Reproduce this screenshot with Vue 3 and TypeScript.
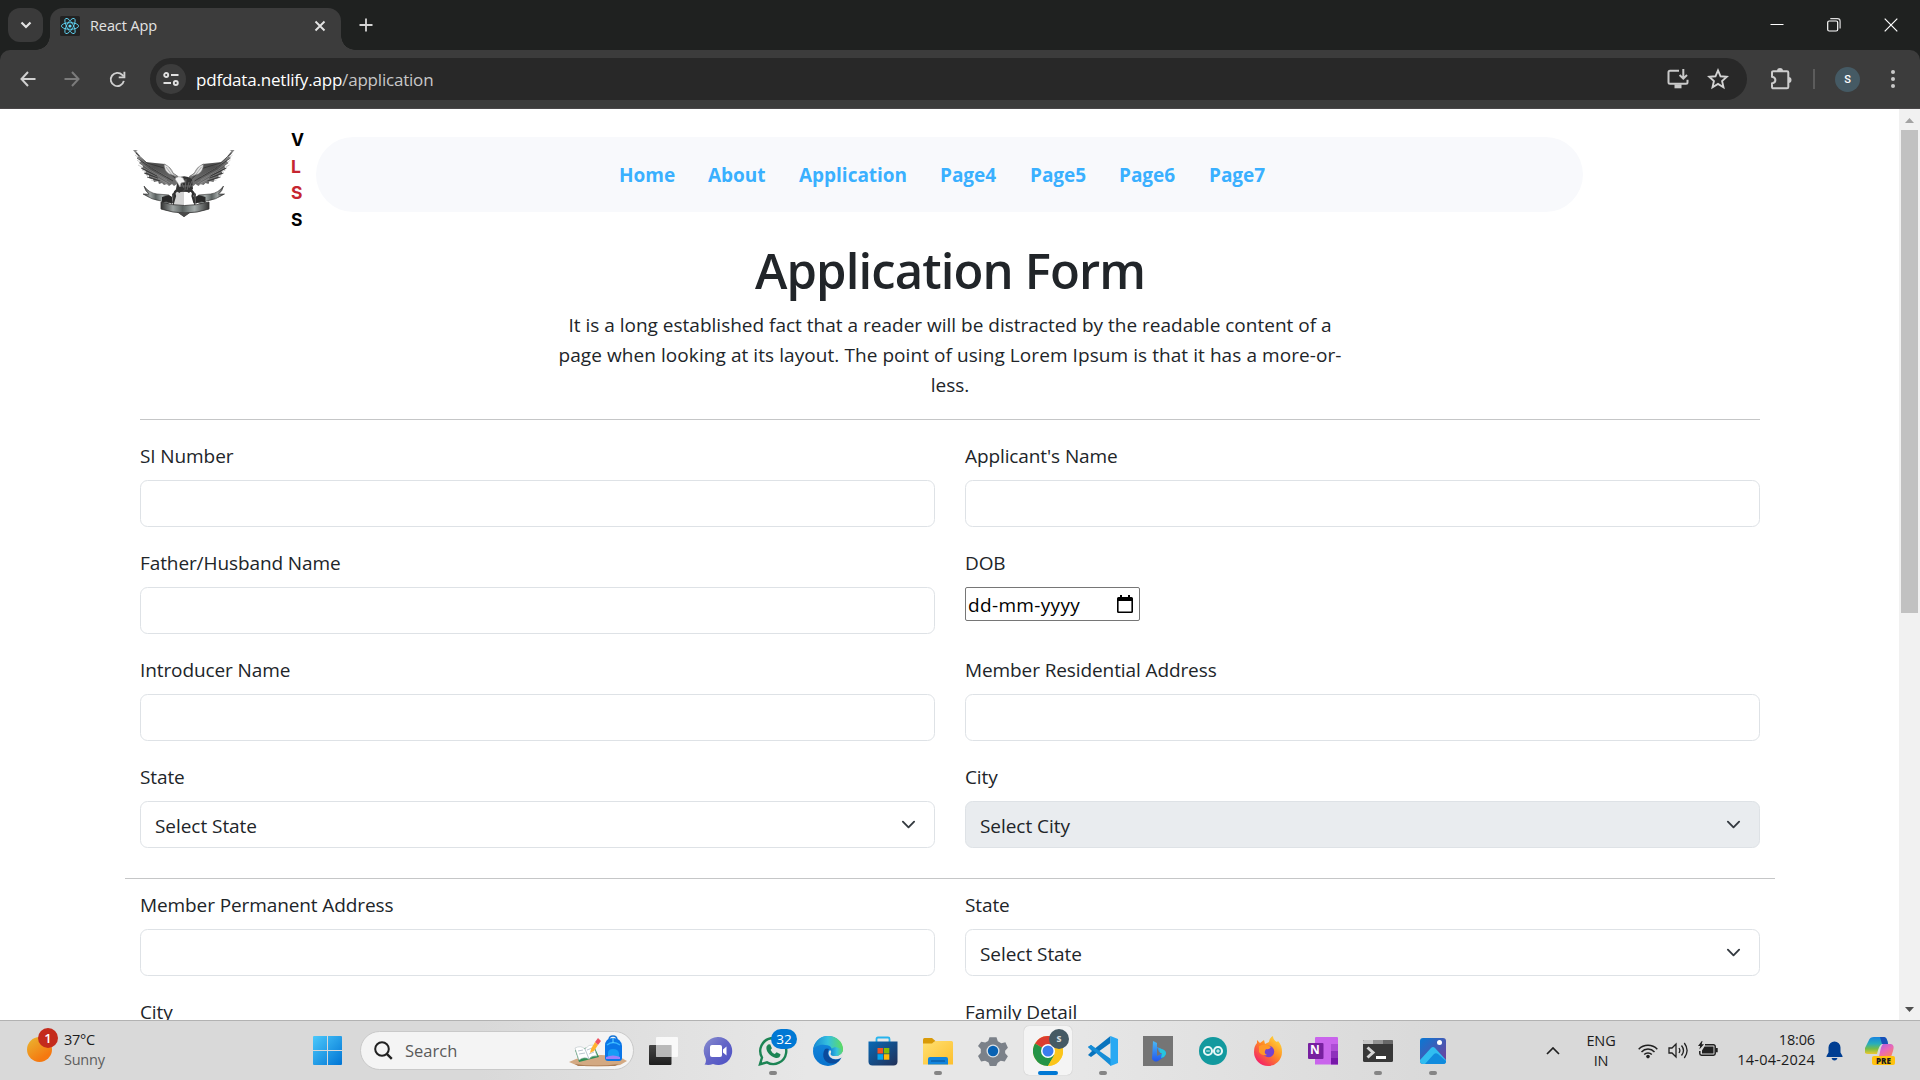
<script setup lang="ts">
import { ref } from 'vue'

interface Field {
  label: string
  kind: 'text' | 'date' | 'select'
  placeholder?: string
  disabled?: boolean
}

const navLinks = ref<{ label: string; width: number }[]>([
  { label: 'Home', width: 89 },
  { label: 'About', width: 91 },
  { label: 'Application', width: 141 },
  { label: 'Page4', width: 90 },
  { label: 'Page5', width: 89 },
  { label: 'Page6', width: 90 },
  { label: 'Page7', width: 58 },
])

const residential: Field[] = [
  { label: 'SI Number', kind: 'text' },
  { label: "Applicant's Name", kind: 'text' },
  { label: 'Father/Husband Name', kind: 'text' },
  { label: 'DOB', kind: 'date', placeholder: 'dd-mm-yyyy' },
  { label: 'Introducer Name', kind: 'text' },
  { label: 'Member Residential Address', kind: 'text' },
  { label: 'State', kind: 'select', placeholder: 'Select State' },
  { label: 'City', kind: 'select', placeholder: 'Select City', disabled: true },
]

const permanent: Field[] = [
  { label: 'Member Permanent Address', kind: 'text' },
  { label: 'State', kind: 'select', placeholder: 'Select State' },
  { label: 'City', kind: 'text' },
  { label: 'Family Detail', kind: 'text' },
]

const groups = [residential, permanent]
const letters = ['V', 'L', 'S', 'S']
</script>

<template>
  <div class="screen">
    <header class="tabbar">
      <button class="tab-search">
        <svg width="12" height="8" viewBox="0 0 12 8"><path d="M1.5 1.5 6 6l4.500-4.500" fill="none" stroke="#e3e3e3" stroke-width="2.200" /></svg>
      </button>
      <div class="tab">
        <svg class="favicon" width="20" height="20" viewBox="0 0 20 20">
          <rect width="20" height="20" rx="1.500" fill="#222" />
          <g fill="none" stroke="#61dafb" stroke-width="0.850">
            <ellipse cx="10" cy="10" rx="8.600" ry="3.300" />
            <ellipse cx="10" cy="10" rx="8.600" ry="3.300" transform="rotate(60 10 10)" />
            <ellipse cx="10" cy="10" rx="8.600" ry="3.300" transform="rotate(120 10 10)" />
          </g>
          <circle cx="10" cy="10" r="1.600" fill="#61dafb" />
        </svg>
        <span class="tab-title">React App</span>
        <svg class="tab-close" width="12" height="12" viewBox="0 0 12 12"><path d="M1.500 1.500l9 9M10.500 1.500l-9 9" stroke="#e3e3e3" stroke-width="1.900" /></svg>
      </div>
      <svg class="new-tab" width="14" height="14" viewBox="0 0 14 14"><path d="M7 .5v13M.5 7h13" stroke="#d5d5d5" stroke-width="1.800" /></svg>
      <div class="window-buttons">
        <svg width="14" height="14" viewBox="0 0 14 14"><path d="M.5 6.500h13" stroke="#fff" /></svg>
        <svg width="14" height="14" viewBox="0 0 14 14" fill="none"><rect x=".7" y="3" width="10" height="10" rx="1.500" stroke="#fff" stroke-width="1.200" /><path d="M3.300.7h7.200a2.600 2.600 0 0 1 2.600 2.600v7.300" stroke="#ddd" stroke-width="1.200" /></svg>
        <svg width="14" height="14" viewBox="0 0 14 14"><path d="M.7.7l12.600 12.600M13.300.7L.7 13.300" stroke="#fff" stroke-width="1.200" /></svg>
      </div>
    </header>

    <div class="toolbar-back">
      <div class="toolbar">
        <svg class="tool back" width="16" height="16" viewBox="0 0 16 16"><path d="M8 1 1.500 8 8 15M1.500 8H15.500" fill="none" stroke="#d0d0d0" stroke-width="2" /></svg>
        <svg class="tool forward" width="16" height="16" viewBox="0 0 16 16"><path d="M8 1l6.500 7L8 15M14.500 8H.5" fill="none" stroke="#7b7b7b" stroke-width="2" /></svg>
        <svg class="tool reload" width="17" height="17" viewBox="0 0 18 18"><path d="M15.700 10.500A7 7 0 1 1 14 4.200l1.500 1.600" fill="none" stroke="#d0d0d0" stroke-width="2" /><path d="M16.300.7v6H10.300" fill="none" stroke="#d0d0d0" stroke-width="2" /></svg>
        <div class="omnibox">
          <span class="site-info">
            <svg width="16" height="14" viewBox="0 0 16 14" fill="none" stroke="#e0e0e0" stroke-width="1.900"><circle cx="3.200" cy="3" r="2" /><path d="M8 3h7.500M.5 11H8" /><circle cx="12.800" cy="11" r="2" /></svg>
          </span>
          <span class="url">pdfdata.netlify.app<em>/application</em></span>
          <svg class="install" width="22" height="20" viewBox="0 0 22 20" fill="none" stroke="#c9c9c9" stroke-width="2"><path d="M12 1.800H3a1.500 1.500 0 0 0-1.500 1.500v10A1.500 1.500 0 0 0 3 14.800h16a1.500 1.500 0 0 0 1.500-1.500v-2.500" /><path d="M16.300 0v9.300M12.600 6l3.700 3.700L20 6" /><path d="M7.500 17.300h7" stroke-width="4" /></svg>
          <svg class="star" width="22" height="22" viewBox="0 0 20 20"><path d="M10 2.200l2.300 5.300 5.700.5-4.300 3.800 1.300 5.700-5-3-5 3 1.300-5.700L2 8l5.700-.5z" fill="none" stroke="#d2d2d2" stroke-width="1.700" /></svg>
        </div>
        <svg class="puzzle" width="22" height="22" viewBox="0 0 22 22"><path d="M2 4.500A1.300 1.300 0 0 1 3.300 3.200H17a1.300 1.300 0 0 1 1.300 1.300V19A1.300 1.300 0 0 1 17 20.300H3.300A1.300 1.300 0 0 1 2 19v-3.600c4.500-.7 4.500-6 0-6.700z" fill="none" stroke="#cdcdcd" stroke-width="2" /><path d="M7 3a3 3 0 0 1 6 0zM18.500 9a3 3 0 0 1 0 6z" fill="#cdcdcd" /></svg>
        <i class="separator"></i>
        <span class="avatar">S</span>
        <svg class="dots" width="4" height="20" viewBox="0 0 4 20" fill="#c9c9c9"><circle cx="2" cy="3" r="2" /><circle cx="2" cy="10" r="2" /><circle cx="2" cy="17" r="2" /></svg>
      </div>
    </div>

    <div class="viewport">
      <main class="page">
        <div class="page-header">
          <svg class="eagle" width="102" height="68" viewBox="0 0 102 68">
            <defs>
              <linearGradient id="wing" x1="0" y1="0" x2="1" y2="1"><stop offset="0" stop-color="#8b8b8b" /><stop offset=".45" stop-color="#4e4e4e" /><stop offset="1" stop-color="#777" /></linearGradient>
              <linearGradient id="band"><stop offset="0" stop-color="#333" /><stop offset=".25" stop-color="#9da3a2" /><stop offset=".45" stop-color="#5b6261" /><stop offset=".7" stop-color="#a5acab" /><stop offset="1" stop-color="#333" /></linearGradient>
              <g id="side">
                <path d="M0 0 4 5l9 7 9 1 10 1 5 7 8 5 3 7-4 1-3 2-2-2-3 2-2-2-3 1-2-2-3 1-1-3-4 1-1-3-4-1 0-3-4-1 1-3-4-2 1-3-4-3 2-2-4-4 3-1-4-5 2-1z" fill="url(#wing)" />
                <path d="M2 5 17 17 34 27M4 10 17 20l17 10M5 15 20 23l17 10M9 20 22 26l13 8M13 25l12 4 9 4M18 30l11 2 7 3" fill="none" stroke="#9a9a9a" stroke-width=".5" />
                <path d="M3 3 14 13 31 18 43 29M4 8 20 19 40 31M8 18 24 26M14 27l13 4M11 23l14 5" fill="none" stroke="#303030" stroke-width=".8" />
                <path d="M31 14q7 3 9 9l5 4-9-3q-5-3-5-10z" fill="#e2e2e2" stroke="#666" stroke-width=".6" />
                <path d="M33 17l6 8M36 17l5 8" stroke="#888" stroke-width=".6" />
                <path d="M11 36q5 7 13 8l12 1q3 4 2 7l-7 3q0-3-3-4-9-1-18-7l6 0q-4-3-5-8z" fill="url(#band)" stroke="#343434" stroke-width=".6" />
                <path d="M29 47q8-3 10 0l0 7q-5-4-10-1z" fill="#292929" />
                <path d="M46 39q-6 2-4 7l-2 7" fill="none" stroke="#303030" stroke-width="2.200" />
              </g>
            </defs>
            <path d="M44 40h15l4 4-1 15-11 8-11-8-1-15z" fill="#494949" />
            <path d="M44 42h7v18l-10-3V44z" fill="#d2d2d2" /><path d="M51 42h7l3 3v12l-10 3z" fill="#fff" />
            <use href="#side" /><use href="#side" transform="matrix(-1 0 0 1 101.500 0)" />
            <path d="M45 28q7-4 14 1l1 10-4 4-5-3-5 3-3-4z" fill="#333" />
            <path d="M48 31l3 7M53 29l-1 11M56 32l-2 8M59 31l-3 7M46 36h14" stroke="#777" stroke-width=".7" />
            <path d="M42 29q3-4 8-1l2 4-4 1-1 4-3-5z" fill="#f4f4f4" stroke="#999" stroke-width=".6" />
            <path d="M28 52q23 7 48 0v7q-24 8-48 0z" fill="url(#band)" stroke="#333" stroke-width=".8" />
            <path d="M44 62q7 1 14 0l-7 5z" fill="#4a4a4a" />
          </svg>
          <div class="brand"><span v-for="(l, i) in letters" :key="i" :class="{ red: i === 1 || i === 2 }">{{ l }}</span></div>
          <nav class="nav">
            <a v-for="link in navLinks" :key="link.label" :style="{ width: link.width + 'px' }">{{ link.label }}</a>
          </nav>
        </div>

        <h1>Application Form</h1>
        <p class="lead">
          <span class="opening">It is a long established fact that a reader will be distracted by the readable content of a</span>
          <span class="middle">page when looking at its layout. The point of using Lorem Ipsum is that it has a more-or-</span>
          <span>less.</span>
        </p>
        <hr class="rule inner" />
        <template v-for="(group, g) in groups" :key="g">
          <hr v-if="g > 0" class="rule" />
          <section class="grid">
            <div v-for="(f, i) in group" :key="i" class="field">
              <label>{{ f.label }}</label>
              <div v-if="f.kind === 'text'" class="control"></div>
              <div v-else-if="f.kind === 'date'" class="date">
                <span>{{ f.placeholder }}</span>
                <svg width="16" height="18" viewBox="0 0 16 18"><path d="M3 0h2v2h6V0h2v2h1.500A1.500 1.500 0 0 1 16 3.500v13a1.500 1.500 0 0 1-1.500 1.500h-13A1.500 1.500 0 0 1 0 16.500v-13A1.500 1.500 0 0 1 1.500 2H3zM1.600 6v10.400h12.800V6z" fill="#000" /></svg>
              </div>
              <div v-else class="control select" :class="{ disabled: f.disabled }">
                <span>{{ f.placeholder }}</span>
                <svg width="15" height="15" viewBox="0 0 16 16"><path d="m2 5 6 6 6-6" fill="none" stroke="#343a40" stroke-width="2" stroke-linecap="round" stroke-linejoin="round" /></svg>
              </div>
            </div>
          </section>
        </template>
      </main>
      <aside class="scrollbar">
        <svg width="9" height="5" viewBox="0 0 9 5"><path d="M0 5 4.500 0 9 5z" fill="#a3a3a3" /></svg>
        <i class="thumb"></i>
        <svg class="down" width="9" height="5" viewBox="0 0 9 5"><path d="M0 0 4.500 5 9 0z" fill="#505050" /></svg>
      </aside>
    </div>

    <footer class="taskbar">
      <div class="weather">
        <div class="sun"><b>1</b></div>
        <div class="weather-text"><span>37°C</span><span class="muted">Sunny</span></div>
      </div>
      <svg class="start" width="29" height="29" viewBox="0 0 29 29">
        <defs><linearGradient id="win" x1="0" y1="0" x2="1" y2="1"><stop offset="0" stop-color="#4cc9fb" /><stop offset="1" stop-color="#0074d4" /></linearGradient></defs>
        <path d="M1 0h13v14H0V1a1 1 0 0 1 1-1zM15 0h13a1 1 0 0 1 1 1v13H15zM0 15h14v14H1a1 1 0 0 1-1-1zM15 15h14v13a1 1 0 0 1-1 1H15z" fill="url(#win)" />
      </svg>
      <div class="search">
        <svg class="lens" width="19" height="19" viewBox="0 0 19 19" fill="none" stroke="#202020" stroke-width="2"><circle cx="8" cy="8" r="6.800" /><path d="m12.800 12.800 5 5" stroke-width="2.400" /></svg>
        <span>Search</span>
        <svg class="school" width="58" height="32" viewBox="0 0 58 32">
          <path d="M0 27q14-7 32-7 18 0 26 6l-7 4q-24 3-44 0z" fill="#d3a982" /><path d="M6 29q20 3 44 0l-4 2H9z" fill="#a97b55" />
          <path d="M6 15l4 12 16-4 4-1-5-11z" fill="#2f8f55" /><path d="M6 13q6-3 10 1 4-5 8-4l4 11q-5-1-8 3-5-3-10 1z" fill="#fff" stroke="#b9c3c6" stroke-width=".6" /><path d="M16 14l4 10M9 16l5-1M10 19l6-1M18 15l5-2M20 19l5-2" stroke="#aab7c4" stroke-width=".8" />
          <path d="M22 14l-1 4 4-2 4-6-3-3z" fill="#ffb32e" /><path d="M26 7l3-4 3 3-3 4z" fill="#ef5261" />
          <path d="M40 5q0-4 4-4t4 4" fill="none" stroke="#1674d6" stroke-width="1.500" /><path d="M36 11q0-8 8-8t9 8v12q0 3-3 3H39q-3 0-3-3z" fill="#0a76e8" /><path d="M38 10q6-5 13 0" fill="none" stroke="#38b8ff" stroke-width="1.500" /><path d="M39 18q0-4 5-4t6 4v4H39z" fill="#169cf5" /><path d="M37 22q7-3 14 0v2H37z" fill="#9d80fa" /><path d="M44 3v5" stroke="#62d1ff" />
        </svg>
      </div>

      <div class="apps">
        <div class="app">
          <svg width="30" height="30" viewBox="0 0 30 30"><defs><linearGradient id="tv" x2="0" y2="1"><stop stop-color="#454545" /><stop offset="1" stop-color="#1f1f1f" /></linearGradient></defs><rect x="1" y="9" width="22.500" height="20" rx="1" fill="url(#tv)" /><rect x="8" y="1" width="22" height="20" rx="1" fill="#fff" fill-opacity=".78" /><rect x="8" y="9" width="15.500" height="12" fill="#aaa" fill-opacity=".65" /></svg>
        </div>
        <div class="app">
          <svg width="30" height="30" viewBox="0 0 30 30"><defs><linearGradient id="chat" x2="1" y2="1"><stop stop-color="#8a8fce" /><stop offset=".5" stop-color="#6264c7" /><stop offset="1" stop-color="#4c50c4" /></linearGradient></defs><path d="M15 1a14 14 0 1 1-5 27q-4 1.500-8.500.5 2.500-3 .8-7A14 14 0 0 1 15 1z" fill="url(#chat)" /><rect x="7" y="9" width="12" height="12" rx="2" fill="#fff" /><path d="M20 13.500l3.500-3v9l-3.500-3z" fill="#fff" /></svg>
        </div>
        <div class="app">
          <svg width="30" height="30" viewBox="0 0 30 30"><path d="M2 28.200l2-6.700a13 13 0 1 1 5 4.900z" fill="none" stroke="#1c8454" stroke-width="2.400" /><path d="M10 8.500l2.200-.3 1.700 4-1.300 1.800q1.400 3 4.200 4l1.800-1.700 3.900 1.900c-.2 3.600-3.200 4.300-5.400 3.500C12 20.300 7.500 15 8.500 10.500z" fill="#1c8454" /></svg>
          <b class="count">32</b><i class="dot"></i>
        </div>
        <div class="app">
          <svg width="30" height="30" viewBox="0 0 30 30"><defs><linearGradient id="edge1" x2="1"><stop stop-color="#1687d3" /><stop offset=".5" stop-color="#35c1df" /><stop offset="1" stop-color="#60dc5d" /></linearGradient><linearGradient id="edge2" x2="0" y2="1"><stop stop-color="#158be0" /><stop offset="1" stop-color="#0872cc" /></linearGradient></defs><circle cx="15" cy="15" r="15" fill="url(#edge2)" /><path d="M0 14C2 4 8 0 15 0c9 0 15 6 15 13 0 5-4 7-8 7-3 0-5-1-4-3 2-3 1-8-6-8C6 8 2 11 0 14z" fill="url(#edge1)" /><path d="M12 13c-5 8 1 17 11 14 2-1 4-3 5-5-6 4-14 0-13-6q0-2 1-3-2-1-4 0z" fill="#0b4b9c" /><path d="M18 17c-1 2 1 3 4 3 4 0 7-2 8-6v7l-2 1q-7 3-11-1-3-4 0-7 2 1 1 3z" fill="#e4e5e5" /><path d="M18 17c-1 2 1 3 4 3 5 0 8-3 8-7L22 11l-4 2q1 2 0 4z" fill="url(#edge1)" /></svg>
        </div>
        <div class="app">
          <svg width="30" height="30" viewBox="0 0 30 30"><defs><linearGradient id="store" x2="1" y2="1"><stop stop-color="#0869b5" /><stop offset="1" stop-color="#223058" /></linearGradient></defs><path d="M8.500 6V3q0-1.500 1.500-1.500h10q1.500 0 1.500 1.500v3" fill="none" stroke="#28b4ed" stroke-width="1.800" /><path d="M.5 5.500h29v20q0 4-4 4h-21q-4 0-4-4z" fill="url(#store)" /><path d="M9.500 12H15v5.500H9.500z" fill="#f35325" /><path d="M15.800 12h5.500v5.500h-5.500z" fill="#81bc06" /><path d="M9.500 18.200H15v5.500H9.500z" fill="#05a6f0" /><path d="M15.800 18.200h5.500v5.500h-5.500z" fill="#ffba08" /></svg>
        </div>
        <div class="app">
          <svg width="30" height="30" viewBox="0 0 30 30"><defs><linearGradient id="fold" x2="1" y2="1"><stop stop-color="#ffe071" /><stop offset="1" stop-color="#fdbf2d" /></linearGradient></defs><path d="M0 3.500Q0 2 1.500 2H9l4 3.500H0z" fill="#d99a08" /><path d="M0 7h9l3.500-2H28.500Q30 5 30 6.500v22H0z" fill="url(#fold)" /><path d="M0 5h12l-3 2.500H0z" fill="#d99a08" /><path d="M5 28.500V23q0-2 2-2h16q2 0 2 2v5.500z" fill="#1184dc" /><path d="M8.500 25h13" stroke="#064f91" stroke-width="1.200" stroke-linecap="round" /></svg>
          <i class="dot"></i>
        </div>
        <div class="app">
          <svg width="30" height="30" viewBox="0 0 30 30"><path d="M11.500 1.300h7l1.300 4 3.500 1.900 4.100-1 2.500 5.600-2.800 3 .1 2.500 2.700 3-3.200 5.300-4-.8-3 1.900-1.600 3.500h-6.200l-1.300-3.700-3.500-1.700-4 .8L0 20l2.800-3v-4L0 10l3.200-4.200 4 .8 3-1.700z" fill="#7b8189" /><circle cx="15" cy="15" r="6.500" fill="#dce2e7" /><circle cx="15" cy="15" r="5.200" fill="#0962b3" /></svg>
        </div>
        <div class="app active">
          <svg width="30" height="30" viewBox="0 0 30 30"><circle cx="15" cy="15" r="15" fill="#fdd12e" /><path d="M15 15 2 7.500A15 15 0 0 1 28 7.500z" fill="#dc3c31" /><path d="M15 15 2 7.500A15 15 0 0 0 15 30l6.500-11.300z" fill="#249447" /><path d="M15 15 28 7.500A15 15 0 0 1 15 30l6.500-11.300z" fill="#fbc51b" /><circle cx="15" cy="15" r="7" fill="#fff" /><circle cx="15" cy="15" r="5.500" fill="#3b7ded" /></svg>
          <b class="profile">s</b><i class="dot wide"></i>
        </div>
        <div class="app">
          <svg width="30" height="30" viewBox="0 0 30 30"><path d="M22 0 8 13 3 9 0 11l5 5z" fill="#1384cf" /><path d="M0 19 3 21 22.500 7V0L5 14z" fill="#0873bd" /><path d="M0 11l3-2 20 14v7L7 16z" fill="#168dd7" /><path d="M22.500 0 30 3v24l-7.500 3z" fill="#29a9f3" /></svg>
          <i class="dot"></i>
        </div>
        <div class="app">
          <svg width="30" height="30" viewBox="0 0 30 30"><defs><linearGradient id="bing" x2="0" y2="1"><stop stop-color="#48b9f5" /><stop offset="1" stop-color="#2457ee" /></linearGradient></defs><rect width="30" height="30" fill="#757575" /><path d="M10 5l4 2v13l5-2.500-3-1.500-2-5 7 3q4 3 0 7l-6 4q-2 1-4 0l-2-2z" fill="url(#bing)" /><path d="M16 12l5 2q4 3 0 7l-3 1 1-4.500-2-1z" fill="#27c6dd" /></svg>
        </div>
        <div class="app">
          <svg width="30" height="30" viewBox="0 0 30 30"><circle cx="15" cy="15" r="14" fill="#12999e" /><g fill="none" stroke="#e8f7f7" stroke-width="2.100"><circle cx="10" cy="15" r="4" /><circle cx="20" cy="15" r="4" /></g><path d="M8.200 15h3.600M18.200 15h3.600M20 13.200v3.600" stroke="#e8f7f7" stroke-width="1.100" /></svg>
        </div>
        <div class="app">
          <svg width="30" height="30" viewBox="0 0 30 30"><defs><linearGradient id="fire" x1="1" x2=".2" y2="1"><stop stop-color="#ffed42" /><stop offset=".5" stop-color="#ff8b24" /><stop offset="1" stop-color="#f3176d" /></linearGradient></defs><path d="M16 6q1-5 4-6 0 4 4 6l1-1q4 4 4 11a14 14 0 1 1-28 0q0-6 3-9V4l3 3 4-3 1 4z" fill="url(#fire)" /><circle cx="15.500" cy="15.500" r="5.700" fill="#7542d0" /><path d="M6 10q7-3 12 1-2 3-5 2-3 4 1 6-5 1-8-3z" fill="#ff9829" /></svg>
        </div>
        <div class="app">
          <svg width="30" height="30" viewBox="0 0 30 30"><path d="M8 1h21a1 1 0 0 1 1 1v26.500H7V2q0-1 1-1z" fill="#c964ec" /><path d="M23 8h7v7h-7z" fill="#ad4dd5" /><path d="M23 15h7v7h-7z" fill="#8e32bc" /><path d="M23 22h7v6.500h-7z" fill="#7718a9" /><rect y="7" width="15.500" height="16" rx="1" fill="#7820a0" /></svg>
          <b class="note">N</b>
        </div>
        <div class="app">
          <svg width="30" height="30" viewBox="0 0 30 30"><rect y="4" width="30" height="22" rx="1.500" fill="#383838" /><path d="M1 4h9v4H0V5z" fill="#c7c7c7" /><path d="M10 4h10v4H10z" fill="#939393" /><path d="M20 4h9l1 1v3H20z" fill="#686868" /><path d="M4.500 11.500l5.500 5-5.500 5" fill="none" stroke="#d5d5d5" stroke-width="3" /><path d="M13 21.500h10" stroke="#fff" stroke-width="3" /></svg>
          <i class="dot"></i>
        </div>
        <div class="app">
          <svg width="30" height="30" viewBox="0 0 30 30"><defs><linearGradient id="photo" x2="1" y2="1"><stop stop-color="#0879d4" /><stop offset="1" stop-color="#7a3e98" /></linearGradient></defs><rect x="2" y="2" width="26" height="26" rx="3" fill="url(#photo)" /><path d="M2 24 13 12q2-2 4 0l11 12v1q0 3-3 3H5q-3 0-3-3z" fill="#31bdf0" /><path d="M7 28l9-10q2-1.500 4 0l8 7q0 3-3 3z" fill="#118bdd" /><circle cx="21.500" cy="6.500" r="2.500" fill="#fff" /></svg>
          <i class="dot"></i>
        </div>
      </div>

      <div class="tray">
        <svg class="chev" width="14" height="8" viewBox="0 0 14 8"><path d="m1 7 6-6 6 6" fill="none" stroke="#202020" stroke-width="1.700" /></svg>
        <div class="lang"><span>ENG</span><span>IN</span></div>
        <svg class="cell" width="20" height="16" viewBox="0 0 20 16" fill="none" stroke="#202020" stroke-width="1.500"><path d="M.7 6.200a13 13 0 0 1 18.600 0M3.500 8.900a9 9 0 0 1 13 0M6.200 11.500a5.300 5.300 0 0 1 7.600 0" /><circle cx="10" cy="13.600" r="1.800" fill="#202020" stroke="none" /></svg>
        <svg class="cell" width="20" height="17" viewBox="0 0 20 17" fill="none" stroke="#202020" stroke-width="1.300"><path d="M1 6h3l4-4v13l-4-4H1z" /><path d="M11 6q1.700 2.500 0 5M13.500 3.500q4 5 0 10M16.300 1q5.600 7.500 0 15" /></svg>
        <svg class="cell battery" width="20" height="17" viewBox="0 0 20 17"><path d="M7 3.700h8.500a1.700 1.700 0 0 1 1.700 1.700v7.200a1.700 1.700 0 0 1-1.700 1.700h-12a1.700 1.700 0 0 1-1.700-1.700V10" fill="none" stroke="#202020" stroke-width="1.500" /><path d="M6.500 5.500H15.500v7H4V9.500zM18 7h1.700v4.200H18z" fill="#202020" /><path d="M3.800 0 0 5h2.200L1.300 8.500 6 3.300H3.700L4.500 0z" fill="#202020" /></svg>
        <div class="clock"><span>18:06</span><span class="today">14-04-2024</span></div>
        <svg class="bell" width="17" height="20" viewBox="0 0 17 20"><path d="M8.500.5a6 6 0 0 1 6 6v5l2 3.500v1H.5v-1l2-3.500v-5a6 6 0 0 1 6-6zM5.500 17h6q-.8 2.500-3 2.500t-3-2.500z" fill="#003e92" /></svg>
        <div class="copilot">
          <svg width="30" height="30" viewBox="0 0 30 30"><defs><linearGradient id="cp1" x2="0" y2="1"><stop stop-color="#1683df" /><stop offset=".4" stop-color="#28aebb" /><stop offset=".7" stop-color="#78bd45" /><stop offset="1" stop-color="#eec82f" /></linearGradient><linearGradient id="cp2" x2=".6" y2="1"><stop stop-color="#9f60ec" /><stop offset=".5" stop-color="#e768b9" /><stop offset="1" stop-color="#ff8753" /></linearGradient></defs><path d="M9 1h10q3 0 4 7h-6q-3 1-5 10H3q-5 0-3-6L4 4q1-3 5-3z" fill="url(#cp1)" /><path d="M15 1h4q3 0 4 7h-6z" fill="#1750b8" /><path d="M18 8h8q4 1 2 7l-3 9H12q2-2 3-8t3-8z" fill="url(#cp2)" /></svg>
          <b>PRE</b>
        </div>
      </div>
    </footer>
  </div>
</template>

<style>
html,
body {
  margin: 0;
  overflow: hidden;
  background: #fff;
}
</style>

<style scoped>
* {
  box-sizing: border-box;
}
svg {
  display: block;
  flex: none;
}
.screen {
  width: 1920px;
  height: 1080px;
  display: flex;
  flex-direction: column;
  overflow: hidden;
  font-family: 'Open Sans', 'Noto Sans', sans-serif;
  color: #212529;
  white-space: nowrap;
}
.tabbar {
  height: 50px;
  flex: none;
  background: #1f2120;
  display: flex;
  align-items: center;
  padding-left: 8px;
}
.tab-search {
  width: 35px;
  height: 34px;
  border: 0;
  padding: 0;
  border-radius: 12px;
  background: #3a3a3a;
  display: grid;
  place-items: center;
}
.tab {
  position: relative;
  width: 291px;
  height: 42px;
  align-self: flex-end;
  margin-left: 7px;
  padding: 0 15px 7px 10px;
  border-radius: 13px 13px 0 0;
  background: #3c3c3c;
  display: flex;
  align-items: center;
}
.tab::before,
.tab::after {
  content: '';
  position: absolute;
  bottom: 0;
  width: 14px;
  height: 14px;
}
.tab::before {
  left: -14px;
  background: radial-gradient(circle at 0 0, transparent 13.5px, #3c3c3c 14px);
}
.tab::after {
  right: -14px;
  background: radial-gradient(circle at 100% 0, transparent 13.5px, #3c3c3c 14px);
}
.tab-title {
  margin-left: 10px;
  flex: 1;
  font-size: 14.5px;
  letter-spacing: -0.1px;
  color: #e3e3e3;
}
.new-tab {
  margin-left: 18px;
}
.window-buttons {
  display: flex;
  gap: 43px;
  margin-left: auto;
  padding-right: 22px;
}
.toolbar-back {
  height: 59px;
  flex: none;
  background: #1f2120;
}
.toolbar {
  height: 59px;
  background: #3c3c3c;
  border-bottom: 1px solid #4a4749;
  border-radius: 10px 10px 0 0;
  display: flex;
  align-items: center;
  padding-left: 20px;
}
.forward {
  margin-left: 28px;
}
.reload {
  margin-left: 29px;
}
.omnibox {
  width: 1597px;
  height: 42px;
  margin-left: 24px;
  border-radius: 21px;
  background: #282828;
  display: flex;
  align-items: center;
  padding: 0 18px 0 6px;
}
.site-info {
  width: 30px;
  height: 30px;
  border-radius: 50%;
  background: #3c3c3c;
  display: grid;
  place-items: center;
}
.url {
  margin-left: 10px;
  flex: 1;
  font-size: 17px;
  letter-spacing: -0.2px;
  color: #fff;
}
.url em {
  font-style: normal;
  color: #c7c7c7;
}
.star {
  margin-left: 18px;
}
.puzzle {
  margin-left: 23px;
}
.separator {
  width: 2px;
  height: 20px;
  margin-left: 21px;
  background: #5c5c5c;
}
.avatar {
  width: 25px;
  height: 25px;
  margin-left: 20px;
  border-radius: 50%;
  background: #455a64;
  color: #fff;
  font: 500 11px/25px Roboto, sans-serif;
  text-align: center;
}
.dots {
  margin-left: 31px;
}
.viewport {
  height: 911px;
  flex: none;
  display: flex;
  overflow: hidden;
  background: #fff;
}
.page {
  width: 1899px;
  padding: 0 124px 0 125px;
  overflow: hidden;
  font-size: 19px;
  line-height: 30px;
}
.page-header {
  height: 131px;
  display: flex;
  align-items: flex-start;
}
.eagle {
  margin: 41px 0 0 8px;
}
.brand {
  width: 14px;
  margin: 18px 0 0 56px;
  display: flex;
  flex-direction: column;
  font: 700 17.5px/26.7px Inter, sans-serif;
  color: #000;
}
.brand .red {
  color: #c62530;
}
.nav {
  width: 1267px;
  height: 75px;
  margin: 28px 0 0 11px;
  padding: 0 0 0 303px;
  border-radius: 38px;
  background: #f8f9fc;
  display: flex;
  align-items: center;
  font-weight: 700;
  letter-spacing: -0.02px;
  color: #3ab0ff;
}
h1 {
  margin: 0;
  text-align: center;
  font-size: 49px;
  font-weight: 600;
  line-height: 60px;
  letter-spacing: -0.88px;
}
.lead {
  margin: 10px 0 19px;
  display: flex;
  flex-direction: column;
  align-items: center;
}
.middle {
  letter-spacing: 0.07px;
}
.rule {
  margin: 0;
  border: 0;
  height: 1px;
  background: #c5c6c7;
}
.rule.inner {
  margin: 0 15px 20px;
}
.grid {
  display: grid;
  grid-template-columns: 795px 795px;
  column-gap: 30px;
  row-gap: 20px;
  padding: 0 15px;
}
.grid + .rule {
  margin: 30px 0 10px;
}
.field {
  height: 87px;
}
.field label {
  display: block;
  padding-top: 1px;
  margin-bottom: 9px;
  letter-spacing: -0.1px;
}
.control {
  height: 47px;
  border: 1px solid #dee2e6;
  border-radius: 7.5px;
}
.select {
  display: flex;
  align-items: center;
  justify-content: space-between;
  padding: 2px 18px 0 14px;
  letter-spacing: -0.05px;
}
.select svg {
  margin-top: -3px;
}
.disabled {
  background: #e9ecef;
}
.date {
  width: 175px;
  height: 34px;
  border: 1px solid #767676;
  border-radius: 2px;
  padding: 2px 6px 0 2px;
  display: flex;
  align-items: center;
  justify-content: space-between;
  color: #000;
  letter-spacing: 0.35px;
}
.date svg {
  margin-top: -3px;
}
.scrollbar {
  width: 21px;
  background: #f1f1f1;
  display: flex;
  flex-direction: column;
  align-items: center;
  padding: 9px 0 8px;
}
.thumb {
  width: 17px;
  height: 483px;
  margin-top: 7px;
  background: #c1c1c1;
}
.down {
  margin-top: auto;
}
.taskbar {
  height: 60px;
  flex: none;
  border-top: 1px solid #b2b2b2;
  background: linear-gradient(90deg, #d9d9d9 0 25%, #e7e7e7 42%, #e7e7e7 55%, #d9d9d9 75%);
  display: flex;
  align-items: center;
  color: #1c1c1c;
  font-size: 14.5px;
  line-height: 20px;
}
.weather {
  width: 313px;
  display: flex;
  align-items: center;
  padding: 0 0 2px 27px;
}
.sun {
  position: relative;
  width: 25px;
  height: 25px;
  border-radius: 50%;
  background: linear-gradient(145deg, #e9b832, #f57910 75%);
}
.sun b {
  position: absolute;
  top: -9px;
  left: 11px;
  width: 20px;
  height: 20px;
  border-radius: 50%;
  background: #c42b1c;
  color: #fff;
  font-size: 13px;
  font-weight: 600;
  text-align: center;
}
.weather-text {
  margin-left: 12px;
  display: flex;
  flex-direction: column;
  letter-spacing: -0.25px;
}
.muted {
  color: #5d5d5d;
}
.search {
  width: 274px;
  height: 39px;
  margin-left: 18px;
  border: 1px solid #c9c9c9;
  border-radius: 20px;
  background: #f4f4f4;
  display: flex;
  align-items: center;
  padding: 0 6px 0 13px;
  font-size: 16.5px;
  color: #5a5a5a;
}
.search span {
  margin-left: 12px;
  flex: 1;
}
.apps {
  display: flex;
  margin-left: 1px;
}
.app {
  position: relative;
  width: 55px;
  height: 59px;
  display: grid;
  place-items: center;
}
.app svg {
  position: relative;
}
.active::before {
  content: '';
  position: absolute;
  left: 4px;
  top: 5px;
  width: 48px;
  height: 49px;
  border-radius: 5px;
  background: #f4f4f4;
  box-shadow: 0 0 1px #aaa;
}
.dot {
  position: absolute;
  bottom: 5px;
  left: 24px;
  width: 8px;
  height: 4px;
  border-radius: 2px;
  background: #858585;
}
.dot.wide {
  left: 18px;
  width: 20px;
  background: #0078d4;
}
.count {
  position: absolute;
  left: 26px;
  top: 8px;
  width: 26px;
  height: 20px;
  border-radius: 10px;
  background: #0078d4;
  color: #fff;
  font-size: 13.5px;
  font-weight: 400;
  line-height: 20px;
  text-align: center;
}
.profile {
  position: absolute;
  left: 29px;
  top: 8px;
  width: 20px;
  height: 20px;
  border-radius: 50%;
  background: #455a64;
  color: #d5dadd;
  font-size: 10px;
  line-height: 19px;
  text-align: center;
}
.note {
  position: absolute;
  left: 12px;
  top: 20px;
  width: 16px;
  color: #fff;
  font-size: 12px;
  line-height: 17px;
  text-align: center;
}
.tray {
  flex: 1;
  display: flex;
  align-items: center;
  padding-left: 86px;
}
.lang {
  width: 50px;
  margin-left: 16px;
  display: flex;
  flex-direction: column;
  align-items: center;
  letter-spacing: -0.15px;
}
.cell {
  margin-left: 10px;
}
.battery {
  margin-top: -2px;
}
.lang + .cell {
  margin-left: 12px;
}
.clock {
  width: 97px;
  padding-bottom: 2px;
  display: flex;
  flex-direction: column;
  align-items: flex-end;
  letter-spacing: -0.15px;
}
.today {
  letter-spacing: 0.2px;
}
.bell {
  margin-left: 11px;
}
.copilot {
  position: relative;
  margin-left: 22px;
}
.copilot b {
  position: absolute;
  left: 7px;
  top: 20px;
  width: 23px;
  height: 9px;
  border-radius: 2px;
  background: #ffc20e;
  color: #1b1b1b;
  font-size: 8px;
  line-height: 9px;
  font-weight: 800;
  text-align: center;
}
</style>
